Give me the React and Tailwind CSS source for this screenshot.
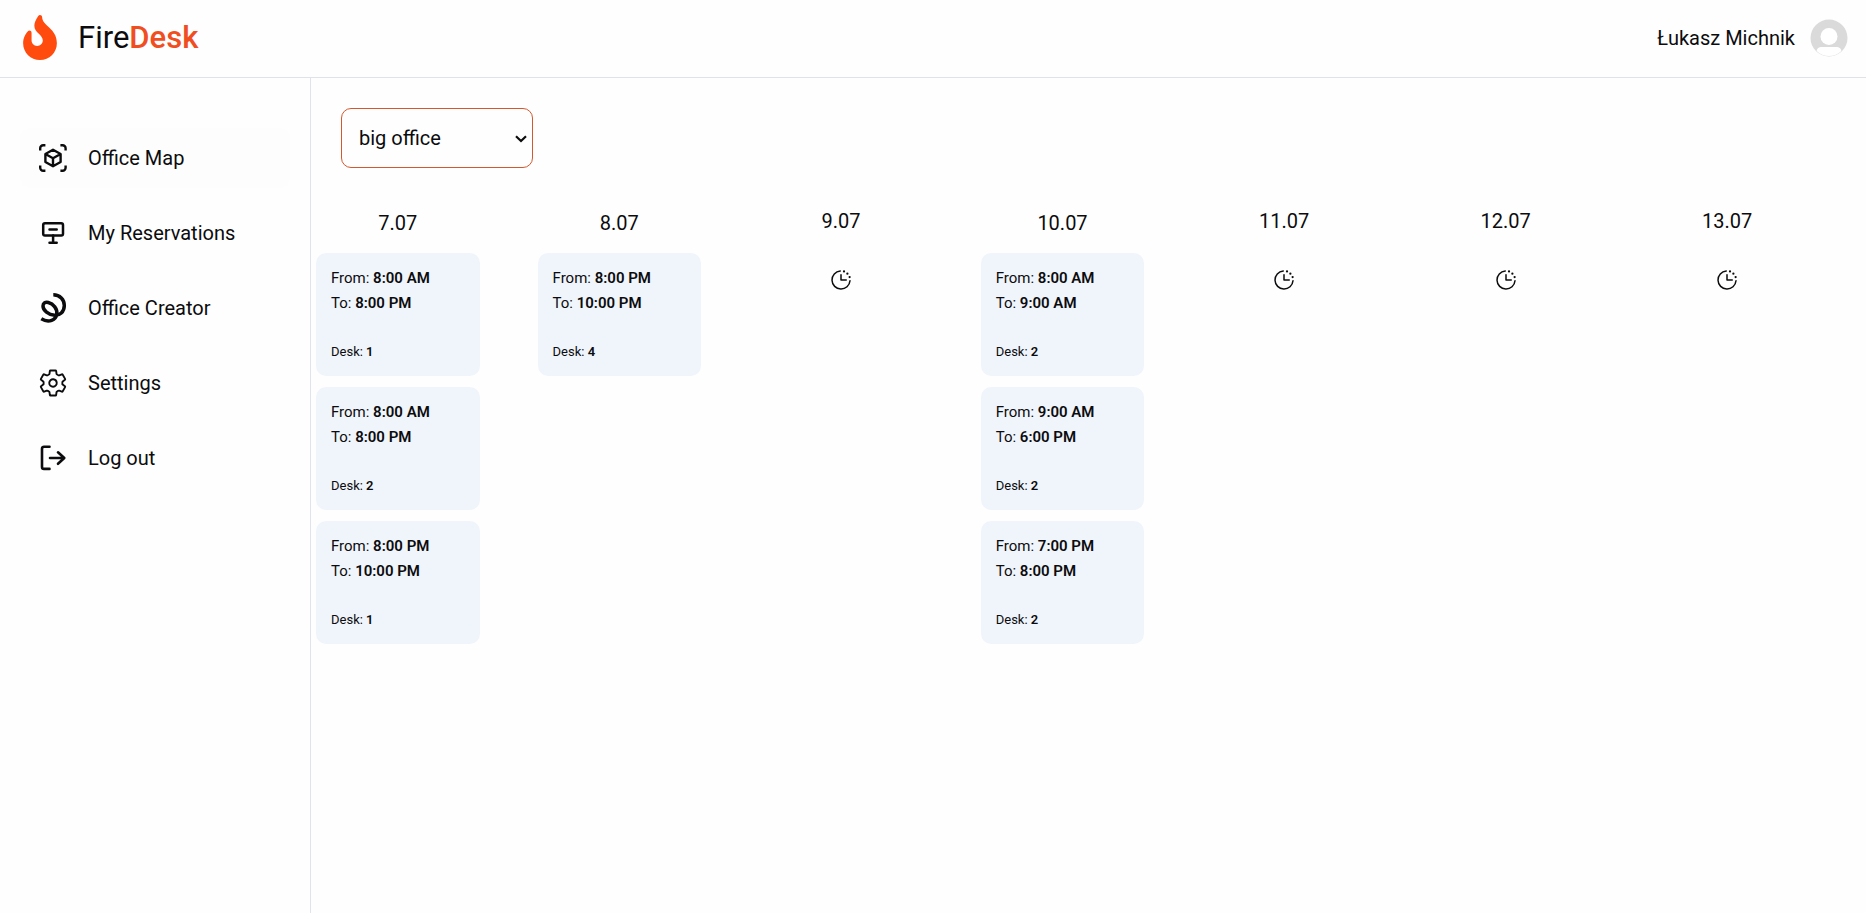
import { FaFire } from "react-icons/fa";
import { IoSettingsOutline } from "react-icons/io5";
import { PiClockCountdown } from "react-icons/pi";

function CubeScanIcon() {
  return (
    <svg viewBox="0 0 30 30" className="size-[30px]" fill="none" stroke="currentColor" strokeLinejoin="round" strokeWidth="2.4">
      <path d="M2.2 7.4V5.2a3 3 0 0 1 3-3h2.2M22.4 2.2h2.200a3 3 0 0 1 3 3v2.200M27.600 22.600v2.200a3 3 0 0 1-3 3h-2.200M7.400 27.800h-2.200a3 3 0 0 1-3-3v-2.200" />
      <path d="M15 6.800l7.600 4.200v8L15 23.200l-7.600-4.200v-8zM7.400 11l7.600 4.200 7.600-4.200M15 15.200v8" />
    </svg>
  );
}

function DeskSignIcon() {
  return (
    <svg viewBox="0 0 30 30" className="size-[30px]" fill="none" stroke="currentColor" strokeLinecap="round" strokeLinejoin="round" strokeWidth="2.5">
      <rect x="5.2" y="5.2" width="19.8" height="12.400" rx="1.800" />
      <path d="M11.500 11.400h7.200M15.100 17.600v7M11.500 24.700h7.200" />
    </svg>
  );
}

function ScribbleIcon() {
  return (
    <svg viewBox="0 0 30 30" className="size-[30px] overflow-visible" fill="none" stroke="currentColor" strokeWidth="3.5">
      <path d="M15.3 1.800C22 1.800 26.300 6.500 26.300 12.500C26.300 19 21.500 22.800 16.500 22.300C10.500 21.800 5 17.500 5 13C5 10 7.500 8.800 10.300 9.500C15.500 10.800 19.500 16 18.800 21C18 26.800 11 30.500 3.300 25.800" />
    </svg>
  );
}

function LogOutIcon() {
  return (
    <svg viewBox="0 0 30 30" className="size-[30px]" fill="none" stroke="currentColor" strokeLinecap="round" strokeLinejoin="round" strokeWidth="2.600">
      <path d="M11.500 3.700H6a2 2 0 0 0-2 2v18.200a2 2 0 0 0 2 2h5.500" />
      <path d="M12 15h14.200M20 9.300L26.300 15L20 20.800" />
    </svg>
  );
}

function Avatar() {
  return (
    <svg viewBox="0 0 38 38" className="size-[38px]" role="img" aria-label="Profile picture">
      <clipPath id="avatar-clip">
        <circle cx="19" cy="19" r="18" />
      </clipPath>
      <circle cx="19" cy="19" r="18.500" fill="#dadada" />
      <g fill="#fff" clipPath="url(#avatar-clip)">
        <circle cx="19" cy="17.500" r="8.500" />
        <path d="M6.500 38v-5c0-3.500 2-5 5.500-5h14c3.500 0 5.500 1.500 5.500 5V38z" />
      </g>
    </svg>
  );
}

const navItems = [
  { label: "Office Map", icon: <CubeScanIcon />, active: true },
  { label: "My Reservations", icon: <DeskSignIcon /> },
  { label: "Office Creator", icon: <ScribbleIcon /> },
  { label: "Settings", icon: <IoSettingsOutline className="size-[30px]" /> },
  { label: "Log out", icon: <LogOutIcon /> },
];

const days = [
  {
    date: "7.07",
    reservations: [
      { from: "8:00 AM", to: "8:00 PM", desk: 1 },
      { from: "8:00 AM", to: "8:00 PM", desk: 2 },
      { from: "8:00 PM", to: "10:00 PM", desk: 1 },
    ],
  },
  { date: "8.07", reservations: [{ from: "8:00 PM", to: "10:00 PM", desk: 4 }] },
  { date: "9.07", reservations: [] },
  {
    date: "10.07",
    reservations: [
      { from: "8:00 AM", to: "9:00 AM", desk: 2 },
      { from: "9:00 AM", to: "6:00 PM", desk: 2 },
      { from: "7:00 PM", to: "8:00 PM", desk: 2 },
    ],
  },
  { date: "11.07", reservations: [] },
  { date: "12.07", reservations: [] },
  { date: "13.07", reservations: [] },
];

function ReservationCard({ from, to, desk }) {
  return (
    <li className="rounded-[10px] bg-[#f0f5fc] px-[15px] pt-[13px] pb-[14px] text-[15px] leading-[25px]">
      <p>
        From: <b className="font-semibold">{from}</b>
      </p>
      <p>
        To: <b className="font-semibold">{to}</b>
      </p>
      <p className="mt-[26px] text-[13px] leading-5">
        Desk: <b className="font-semibold">{desk}</b>
      </p>
    </li>
  );
}

function Day({ date, reservations }) {
  const empty = reservations.length === 0;
  return (
    <section className={empty ? "px-[5px] pt-[7px]" : "px-[5px] pt-[9px]"}>
      <h2 className="text-center text-[20px] leading-7">{date}</h2>
      {empty ? (
        <PiClockCountdown className="mx-auto mt-[33px] size-6" aria-label="No reservations" />
      ) : (
        <ul className="mt-4 flex flex-col gap-[11px]">
          {reservations.map((r, i) => (
            <ReservationCard key={i} {...r} />
          ))}
        </ul>
      )}
    </section>
  );
}

function OfficeSelect() {
  return (
    <div className="relative w-48">
      <select
        aria-label="Office"
        className="h-[60px] w-full appearance-none rounded-[10px] border border-[#d2592f] bg-[#fefefe] pr-7 pl-[17px] text-[20px]"
      >
        <option>big office</option>
      </select>
      <svg
        viewBox="0 0 12 8"
        className="pointer-events-none absolute top-[27px] right-[6px] h-2 w-3"
        fill="none"
        stroke="currentColor"
        strokeWidth="2.200"
        aria-hidden="true"
      >
        <path d="M1 1.200L6 6L11 1.200" />
      </svg>
    </div>
  );
}

export default function App() {
  return (
    <div className="flex min-h-screen flex-col bg-[#fefefe] font-[Roboto,sans-serif] text-[#0c0c0e]">
      <header className="flex h-[78px] items-center justify-between border-b border-[#dfe3e8] pr-[18px] pb-[2px] pl-[23px]">
        <a href="#" className="flex items-center gap-[21px]">
          <FaFire className="h-[45px] w-[34px] text-[#ff4b0e]" aria-hidden="true" />
          <span className="text-[31px] leading-9">
            Fire<b className="font-medium text-[#f04e1f]">Desk</b>
          </span>
        </a>
        <div className="flex items-center gap-[15px] text-[20px]">
          <span>Łukasz Michnik</span>
          <Avatar />
        </div>
      </header>
      <div className="flex flex-1">
        <nav className="w-[311px] shrink-0 border-r border-[#dfe3ec] px-5 pt-[50px]">
          <ul className="flex flex-col gap-[15px]">
            {navItems.map((item) => (
              <li key={item.label}>
                <a
                  href="#"
                  className={
                    item.active
                      ? "flex h-[60px] items-center gap-5 rounded-[10px] bg-[#fdfdfd] pl-[18px] text-[20px]"
                      : "flex h-[60px] items-center gap-5 rounded-[10px] pl-[18px] text-[20px]"
                  }
                >
                  {item.icon}
                  {item.label}
                </a>
              </li>
            ))}
          </ul>
        </nav>
        <main className="min-w-0 flex-1">
          <div className="px-[30px] pt-[30px] pb-8">
            <OfficeSelect />
          </div>
          <div className="grid grid-cols-7 gap-12 pr-[52px]">
            {days.map((day) => (
              <Day key={day.date} {...day} />
            ))}
          </div>
        </main>
      </div>
    </div>
  );
}
